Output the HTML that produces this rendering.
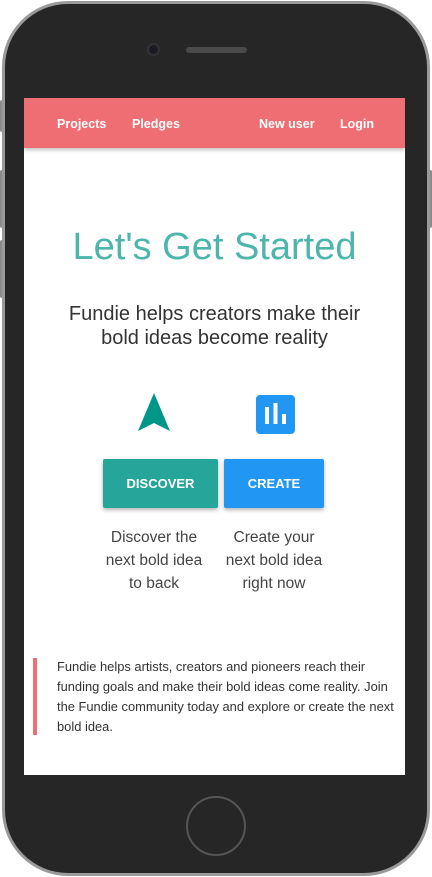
<!DOCTYPE html>
<html><head><style>
*{margin:0;padding:0;box-sizing:border-box}
body{width:432px;height:877px;background:#fff;position:relative;overflow:hidden;font-family:"Liberation Sans",sans-serif}
.phone{position:absolute;left:2px;top:1px;width:428px;height:875px;border-radius:66px;background:#9a9a9a;}
.inner{position:absolute;left:3px;top:3px;right:3px;bottom:3px;border-radius:63px;background:#262626;}
.btn{position:absolute;background:#8a8a8a;width:4px;border-radius:2px}
.screen{position:absolute;left:24px;top:98px;width:381px;height:677px;background:#fff;overflow:hidden}
.nav{height:50px;background:#ef6e73;box-shadow:0 2px 4px rgba(0,0,0,.25);position:relative;color:#fff;font-size:12.5px;font-weight:bold}
.nav span{position:absolute;top:19px}
h1{position:absolute;top:128px;width:100%;text-align:center;font-weight:normal;font-size:38px;color:#4db6ac}
.sub{position:absolute;top:204px;width:100%;text-align:center;font-size:20px;line-height:24px;color:#333}
.b{position:absolute;top:361px;height:49px;color:#fff;font-weight:bold;font-size:13px;text-align:center;line-height:49px;box-shadow:0 2px 4px rgba(0,0,0,.3);border-radius:2px}
.cap{position:absolute;top:428px;width:120px;text-align:center;font-size:15.5px;line-height:23px;color:#444}
.q{position:absolute;left:9px;top:560px;width:4px;height:77px;background:#ef6e73}
.qt{position:absolute;left:33px;top:559px;width:342px;font-size:12.9px;line-height:20px;color:#333}
</style></head><body>
<div class="btn" style="left:0;top:100px;height:32px"></div>
<div class="btn" style="left:0;top:170px;height:58px"></div>
<div class="btn" style="left:0;top:240px;height:58px"></div>
<div class="btn" style="left:428px;top:170px;height:58px"></div>
<div class="phone"><div class="inner"></div></div>
<div style="position:absolute;left:147px;top:43px;width:13px;height:13px;border-radius:50%;background:#1a1a22;border:2px solid #333"></div>
<div style="position:absolute;left:186px;top:47px;width:61px;height:6px;border-radius:3px;background:#4a4a4a"></div>
<div style="position:absolute;left:186px;top:796px;width:60px;height:60px;border-radius:50%;border:2px solid #555"></div>
<div class="screen">
<div class="nav"><span style="left:33px">Projects</span><span style="left:108px">Pledges</span><span style="left:235px">New user</span><span style="left:316px">Login</span></div>
<h1>Let's Get Started</h1>
<div class="sub">Fundie helps creators make their<br>bold ideas become reality</div>
<svg style="position:absolute;left:113px;top:295px" width="34" height="40" viewBox="0 0 34 40"><path d="M17 0 L33 38 L17 30 L1 38 Z" fill="#009688"/></svg>
<svg style="position:absolute;left:232px;top:297px" width="39" height="39" viewBox="0 0 39 39"><rect width="39" height="39" rx="4" fill="#2196f3"/><rect x="9" y="12" width="4" height="17" fill="#fff"/><rect x="17.5" y="8" width="4" height="21" fill="#fff"/><rect x="26" y="19" width="4" height="10" fill="#fff"/></svg>
<div class="b" style="left:79px;width:115px;background:#26a69a">DISCOVER</div>
<div class="b" style="left:200px;width:100px;background:#2196f3">CREATE</div>
<div class="cap" style="left:70px">Discover the<br>next bold idea<br>to back</div>
<div class="cap" style="left:190px">Create your<br>next bold idea<br>right now</div>
<div class="q"></div>
<div class="qt">Fundie helps artists, creators and pioneers reach their funding goals and make their bold ideas come reality. Join the Fundie community today and explore or create the next bold idea.</div>
</div>
</body></html>
